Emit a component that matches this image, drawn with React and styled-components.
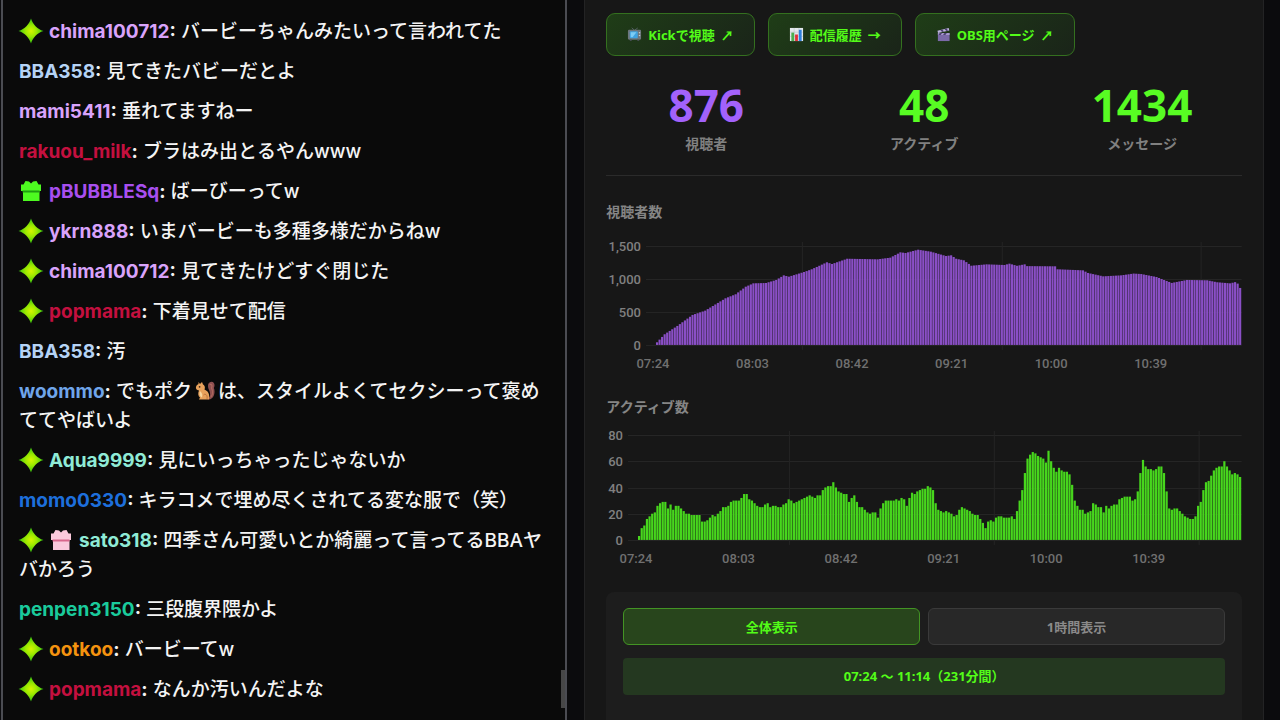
import { useState } from 'react';
import styled, { createGlobalStyle } from 'styled-components';

const GlobalStyle = createGlobalStyle`
	* {
		box-sizing: border-box;
	}
	body {
		margin: 0;
		background: #0b0b0d;
		overflow: hidden;
	}
	button {
		font-family: inherit;
		cursor: pointer;
	}
`;

const NAME_COLORS = {
	pink: '#d9a3fb',
	sky: '#b5d3f5',
	red: '#c4103f',
	purple: '#a84fee',
	blue: '#6fa5ea',
	mint: '#8febd6',
	royal: '#1d6fdc',
	teal: '#1acb9c',
	orange: '#f5930f',
};

const messages = [
	{ badges: ['star'], name: 'chima100712', color: 'pink', text: 'バービーちゃんみたいって言われてた' },
	{ badges: [], name: 'BBA358', color: 'sky', text: '見てきたバビーだとよ' },
	{ badges: [], name: 'mami5411', color: 'pink', text: '垂れてますねー' },
	{ badges: [], name: 'rakuou_milk', color: 'red', text: 'ブラはみ出とるやんwww' },
	{ badges: ['gift'], name: 'pBUBBLESq', color: 'purple', text: 'ばーびーってw' },
	{ badges: ['star'], name: 'ykrn888', color: 'pink', text: 'いまバービーも多種多様だからねw' },
	{ badges: ['star'], name: 'chima100712', color: 'pink', text: '見てきたけどすぐ閉じた' },
	{ badges: ['star'], name: 'popmama', color: 'red', text: '下着見せて配信' },
	{ badges: [], name: 'BBA358', color: 'sky', text: '汚' },
	{
		badges: [],
		name: 'woommo',
		color: 'blue',
		text: 'でもポク',
		emote: true,
		rest: 'は、スタイルよくてセクシーって褒めててやばいよ',
	},
	{ badges: ['star'], name: 'Aqua9999', color: 'mint', text: '見にいっちゃったじゃないか' },
	{ badges: [], name: 'momo0330', color: 'royal', text: 'キラコメで埋め尽くされてる変な服で（笑）' },
	{
		badges: ['star', 'pinkGift'],
		name: 'sato318',
		color: 'mint',
		text: '四季さん可愛いとか綺麗って言ってるBBAヤバかろう',
	},
	{ badges: [], name: 'penpen3150', color: 'teal', text: '三段腹界隈かよ' },
	{ badges: ['star'], name: 'ootkoo', color: 'orange', text: 'バービーてw' },
	{ badges: ['star'], name: 'popmama', color: 'red', text: 'なんか汚いんだよな' },
];

// [minute, viewers]
const viewerPoints = [
	[0, 40], [3, 162], [8, 288], [14, 455], [19, 520], [27, 707], [31, 768], [35, 883],
	[38, 934], [43, 939], [47, 985], [50, 1055], [52, 1035], [58, 1106], [61, 1147], [67, 1253],
	[69, 1227], [75, 1307], [87, 1298], [92, 1323], [96, 1404], [98, 1394], [103, 1444], [108, 1414],
	[114, 1348], [116, 1359], [118, 1307], [121, 1283], [124, 1201], [130, 1222], [137, 1212], [139, 1232],
	[142, 1200], [145, 1222], [146, 1195], [157, 1192], [158, 1147], [168, 1131], [170, 1091], [176, 1040],
	[183, 1055], [188, 1082], [191, 1075], [197, 1030], [203, 940], [209, 985], [217, 980], [221, 950],
	[226, 934], [228, 952], [229, 930], [230, 864],
];

const activeValues = [
	3, 9, 11, 16, 18, 20, 21, 26, 28, 29, 29, 24, 27, 23, 26, 26, 24, 22, 20, 20,
	19, 19, 19, 19, 14, 14, 15, 17, 19, 18, 20, 22, 25, 25, 26, 29, 30, 30, 30, 32,
	35, 35, 31, 30, 28, 26, 25, 25, 27, 28, 25, 26, 26, 25, 25, 27, 28, 31, 30, 28,
	29, 30, 31, 32, 33, 34, 33, 32, 34, 34, 38, 40, 41, 41, 44, 40, 37, 36, 35, 35,
	29, 32, 34, 29, 25, 25, 23, 21, 20, 21, 21, 17, 24, 28, 30, 30, 30, 30, 31, 30,
	32, 31, 26, 32, 36, 35, 37, 38, 39, 39, 41, 40, 38, 28, 23, 22, 21, 22, 21, 20,
	18, 19, 23, 25, 24, 23, 22, 20, 19, 19, 16, 13, 9, 14, 15, 14, 17, 18, 18, 17,
	17, 17, 18, 16, 22, 30, 38, 51, 62, 65, 67, 66, 64, 63, 62, 59, 68, 60, 55, 52,
	55, 53, 52, 52, 50, 42, 30, 26, 23, 23, 20, 21, 22, 28, 27, 25, 25, 21, 26, 24,
	26, 27, 27, 31, 32, 33, 33, 33, 30, 31, 37, 51, 61, 56, 54, 54, 53, 54, 56, 56,
	51, 37, 24, 23, 24, 24, 22, 20, 18, 17, 16, 16, 18, 26, 29, 38, 44, 45, 49, 53,
	55, 56, 56, 60, 56, 53, 50, 51, 50, 48,
];

const fillMinutes = (points) => {
	const values = [];
	for (let i = 0; i < points.length - 1; i++) {
		const [from, a] = points[i];
		const [to, b] = points[i + 1];
		for (let m = from; m < to; m++) {
			values.push(a + ((b - a) * (m - from)) / (to - from));
		}
	}
	values.push(points[points.length - 1][1]);
	return values;
};

const viewerValues = fillMinutes(viewerPoints);
const timeLabels = ['07:24', '08:03', '08:42', '09:21', '10:00', '10:39'];

const StarBadge = () => (
	<BadgeSvg viewBox="0 0 24 24" role="img" aria-label="サブスク">
		<defs>
			<radialGradient id="starFill">
				<stop offset="0" stopColor="#d4f500" />
				<stop offset="0.45" stopColor="#9be800" />
				<stop offset="1" stopColor="#2fc40f" />
			</radialGradient>
		</defs>
		<path
			d="M12 -0.5C14 5.6 18 10 24.500 12C18 14 14 18.400 12 24.500C10 18.400 6 14 -0.500 12C6 10 10 5.600 12 -0.500Z"
			fill="url(#starFill)"
		/>
	</BadgeSvg>
);

const GiftBadge = ({ main, band }) => (
	<BadgeSvg viewBox="0 0 24 24" role="img" aria-label="ギフト">
		<path d="M6.500 2L10 2.500L12 4.500L14 2.500L17.500 2L19.500 5.500H22V12H2V5.500H4.500Z" fill={main} />
		<path d="M4 12H20.500V22H4Z" fill={main} />
		<path d="M3.500 11.500H20.500V13.500H3.500Z" fill={band} />
	</BadgeSvg>
);

const badgeByType = {
	star: <StarBadge />,
	gift: <GiftBadge main="#4dfa20" band="#1f9c10" />,
	pinkGift: <GiftBadge main="#fbc9dc" band="#d9668c" />,
};

const Squirrel = () => (
	<EmoteSvg viewBox="0 0 20 20" role="img" aria-label="リス">
		<path d="M12 17C16 17 15.500 12 14 9C12 5 13 1 16.500 0.800C20 1 20 5 18.800 7C20.500 10 19.500 18 14 18.500Z" fill="#8e4f50" />
		<path d="M14.500 3.500C17 3 17.500 5 16.500 7C18 10 17.500 14 16 16" fill="none" stroke="#b06a5e" strokeWidth="1.200" />
		<path d="M3.500 1L5 3L7 1L8 3.500C10.500 5 10 7.500 9.500 8.500C13 10 15 13 14 18.500H4L5 16.500C3 15 2.800 12 4 9.500C1.500 9 0.500 7.500 1 6C1.500 4 2.500 3.500 3.500 3Z" fill="#e8a25c" />
		<path d="M5 10C4 12.500 4.500 15 6.500 16.500C8 15 7.500 12 5 10Z" fill="#f8d7a0" />
		<path d="M8.500 14C10 12 13 14 12 18" fill="none" stroke="#b9713c" strokeWidth="0.900" />
		<circle cx="4.600" cy="5.800" r="0.900" fill="#3c2417" />
	</EmoteSvg>
);

const TvIcon = () => (
	<LinkSvg viewBox="0 0 16 16" aria-hidden="true">
		<path d="M5 0.800L8 3.500L11.500 1" fill="none" stroke="#5d666c" strokeWidth="0.900" />
		<rect x="1" y="3" width="14" height="10.500" rx="1.200" fill="#6d767c" />
		<rect x="3" y="4.500" width="8.500" height="7.500" rx="1" fill="#3fa2e0" />
		<path d="M4 5.500H10L6 11H4Z" fill="#7cccf5" />
		<circle cx="13.300" cy="6" r="0.800" fill="#c6ced2" />
		<circle cx="13.300" cy="9" r="0.800" fill="#c6ced2" />
		<path d="M3 13.500H5V15H3ZM11 13.500H13V15H11Z" fill="#454d52" />
	</LinkSvg>
);

const ChartIcon = () => (
	<LinkSvg viewBox="0 0 16 16" aria-hidden="true">
		<rect x="1" y="1" width="14" height="14" fill="#e3e8ec" />
		<path d="M1 5.500H15M1 10H15M5.500 1V15M10.500 1V15" stroke="#b5c1c9" strokeWidth="0.600" />
		<rect x="2.500" y="6" width="3" height="9" fill="#4caf50" />
		<rect x="6.500" y="8" width="3" height="7" fill="#e0303a" />
		<rect x="10.500" y="3" width="3" height="12" fill="#2f7fe0" />
	</LinkSvg>
);

const ClapperIcon = () => (
	<LinkSvg viewBox="0 0 16 16" aria-hidden="true">
		<path d="M1.500 4L13.500 1L14.200 3.600L2.200 6.400Z" fill="#bfb4e0" />
		<path d="M4.500 3.300L6.500 5.400L8.500 4.900L6.700 2.700ZM9 2.100L11 4.300L13 3.800L11.200 1.600Z" fill="#4d4170" />
		<rect x="2" y="6.500" width="12.500" height="8.500" fill="#7b6aa8" />
		<path d="M2 6.500H14.500V8.500H2Z" fill="#a99bd0" />
		<path d="M4 6.500H6.500L5 8.500H2.500ZM9 6.500H11.500L10 8.500H7.500Z" fill="#4d4170" />
	</LinkSvg>
);

const links = [
	{ icon: <TvIcon />, label: 'Kickで視聴', arrow: '↗' },
	{ icon: <ChartIcon />, label: '配信履歴', arrow: '→' },
	{ icon: <ClapperIcon />, label: 'OBS用ページ', arrow: '↗' },
];

const stats = [
	{ value: 876, label: '視聴者', color: '#a262fb' },
	{ value: 48, label: 'アクティブ', color: '#58fc23' },
	{ value: 1434, label: 'メッセージ', color: '#58fc23' },
];

const BarChart = ({ title, values, max, ticks, left, top, plotHeight, color, labelStart, labelStep, gridX }) => {
	const width = 636;
	const bottom = top + plotHeight;
	const pitch = (width - left) / values.length;
	return (
		<ChartSvg viewBox={`0 0 ${width} ${bottom + 26}`} role="img" aria-label={title}>
			{ticks.map((tick) => {
				const y = Math.round(bottom - (tick / max) * plotHeight);
				return (
					<g key={tick}>
						<rect x={left - 10} y={y} width={width - left + 10} height="1" fill="#262626" />
						<AxisText x={left - 15} y={y + 5} textAnchor="end">
							{tick.toLocaleString('en-US')}
						</AxisText>
					</g>
				);
			})}
			{gridX.map((x) => (
				<rect key={x} x={x} y={top - 4} width="1" height={plotHeight + 9} fill="#242424" />
			))}
			{values.map((value, i) => {
				const height = (value / max) * plotHeight;
				return (
					<rect key={i} x={left + i * pitch} y={bottom - height} width={pitch * 0.84} height={height} fill={color} />
				);
			})}
			{timeLabels.map((label, i) => (
				<AxisText key={label} x={labelStart + i * labelStep} y={bottom + 23} textAnchor="middle" $dim>
					{label}
				</AxisText>
			))}
		</ChartSvg>
	);
};

const App = () => {
	const [range, setRange] = useState('all');

	return (
		<Page>
			<GlobalStyle />
			<Chat>
				<MessageList>
					{messages.map((message, i) => (
						<Message key={i}>
							{message.badges.map((type) => (
								<Badge key={type}>{badgeByType[type]}</Badge>
							))}
							<UserName $color={NAME_COLORS[message.color]}>{message.name}</UserName>
							<Colon>:</Colon> {message.text}
							{message.emote && <Squirrel />}
							{message.rest}
						</Message>
					))}
				</MessageList>
				<ScrollThumb />
			</Chat>
			<Panel>
				<Links>
					{links.map(({ icon, label, arrow }) => (
						<LinkButton key={label} href="#">
							{icon}
							<span>{label}</span>
							<Arrow>{arrow}</Arrow>
						</LinkButton>
					))}
				</Links>
				<Stats>
					{stats.map(({ value, label, color }) => (
						<Stat key={label}>
							<StatValue $color={color}>{value}</StatValue>
							<StatLabel>{label}</StatLabel>
						</Stat>
					))}
				</Stats>
				<ChartSection>
					<ChartTitle>視聴者数</ChartTitle>
					<BarChart
						title="視聴者数"
						values={viewerValues}
						max={1500}
						ticks={[0, 500, 1000, 1500]}
						left={50}
						top={10}
						plotHeight={99}
						color="#8a4fc6"
						labelStart={47}
						labelStep={99.6}
						gridX={[196, 396, 595]}
					/>
				</ChartSection>
				<ChartSection>
					<ChartTitle>アクティブ数</ChartTitle>
					<BarChart
						title="アクティブ数"
						values={activeValues}
						max={80}
						ticks={[0, 20, 40, 60, 80]}
						left={32}
						top={4}
						plotHeight={105}
						color="#47d61d"
						labelStart={30}
						labelStep={102.6}
						gridX={[183, 388, 593]}
					/>
				</ChartSection>
				<Controls>
					<RangeButtons>
						<RangeButton type="button" $active={range === 'all'} onClick={() => setRange('all')}>
							全体表示
						</RangeButton>
						<RangeButton type="button" $active={range === 'hour'} onClick={() => setRange('hour')}>
							1時間表示
						</RangeButton>
					</RangeButtons>
					<RangeInfo>07:24 〜 11:14（231分間）</RangeInfo>
				</Controls>
			</Panel>
		</Page>
	);
};

export default App;

const Page = styled.div`
	display: grid;
	grid-template-columns: 5fr 6fr;
	gap: 17px;
	height: 100vh;
	padding: 0 16px 0 1px;
	overflow: hidden;
`;
const Chat = styled.section`
	position: relative;
	min-width: 0;
	background: #0a0a0a;
	border: solid #4b4c52;
	border-width: 0 2px;
	overflow: hidden;
`;
const MessageList = styled.ul`
	display: flex;
	flex-direction: column;
	gap: 11px;
	margin: 0;
	padding: 17px 16px;
	list-style: none;
`;
const Message = styled.li`
	color: #f4f4f4;
	font-family: Inter, 'Noto Sans CJK JP', sans-serif;
	font-size: 19px;
	font-weight: 500;
	line-height: 29px;
`;
const UserName = styled.span`
	color: ${({ $color }) => $color};
	font-weight: 700;
`;
const Colon = styled.span`
	font-weight: 700;
`;
const Badge = styled.span`
	display: inline-block;
	height: 24px;
	margin-right: 6px;
	vertical-align: top;
`;
const BadgeSvg = styled.svg`
	display: block;
	width: 24px;
	height: 24px;
	margin-top: 2px;
	overflow: visible;
`;
const EmoteSvg = styled.svg`
	width: 20px;
	height: 20px;
	margin: 0 3px;
	vertical-align: -3px;
`;
const ScrollThumb = styled.div`
	position: absolute;
	right: 0;
	bottom: 12px;
	width: 4px;
	height: 38px;
	background: #474747;
`;
const Panel = styled.main`
	min-width: 0;
	padding: 13px 21px 0;
	background: #171717;
	border: solid #232324;
	border-width: 0 1px;
	font-family: 'Noto Sans', 'Noto Sans CJK JP', sans-serif;
	overflow: hidden;
`;
const Links = styled.nav`
	display: flex;
	gap: 13px;
`;
const LinkButton = styled.a`
	display: flex;
	align-items: center;
	gap: 6px;
	height: 43px;
	padding: 0 20px;
	border: 1px solid #34701f;
	border-radius: 9px;
	background: linear-gradient(135deg, #1f3d17, #1a2419);
	color: #53fc18;
	font-size: 13px;
	font-weight: 700;
	text-decoration: none;
	white-space: nowrap;
`;
const Arrow = styled.span`
	font-family: 'Noto Sans CJK JP', sans-serif;
	font-weight: 900;
`;
const LinkSvg = styled.svg`
	width: 15px;
	height: 15px;
`;
const Stats = styled.div`
	display: grid;
	grid-template-columns: repeat(3, 1fr);
	gap: 18px;
	padding: 20px 0 21px;
	border-bottom: 1px solid #2b2b2b;
`;
const Stat = styled.div`
	text-align: center;
`;
const StatValue = styled.div`
	color: ${({ $color }) => $color};
	font-size: 44px;
	font-weight: 700;
	line-height: 58px;
`;
const StatLabel = styled.div`
	color: #808080;
	font-size: 14px;
	font-weight: 700;
	line-height: 20px;
`;
const ChartSection = styled.section`
	padding-top: 26px;
`;
const ChartTitle = styled.h2`
	margin: 0 0 14px;
	color: #858585;
	font-size: 14px;
	font-weight: 700;
	line-height: 20px;
`;
const ChartSvg = styled.svg`
	display: block;
	width: 100%;
	height: auto;
	overflow: visible;
`;
const AxisText = styled.text`
	fill: ${({ $dim }) => ($dim ? '#707070' : '#808080')};
	font-family: Roboto, 'Liberation Sans', sans-serif;
	font-size: 13px;
	font-weight: 500;
`;
const Controls = styled.section`
	display: flex;
	flex-direction: column;
	gap: 13px;
	margin-top: 26px;
	padding: 16px 17px 60px;
	border-radius: 8px;
	background: #1d1d1d;
`;
const RangeButtons = styled.div`
	display: grid;
	grid-template-columns: 1fr 1fr;
	gap: 8px;
`;
const RangeButton = styled.button`
	height: 37px;
	border: 1px solid ${({ $active }) => ($active ? '#439424' : '#3a3a3a')};
	border-radius: 6px;
	background: ${({ $active }) => ($active ? '#28451c' : '#282828')};
	color: ${({ $active }) => ($active ? '#53fc18' : '#8a8a8a')};
	font-size: 13px;
	font-weight: 700;
`;
const RangeInfo = styled.div`
	border-radius: 4px;
	background: #243820;
	color: #53fc18;
	font-size: 13px;
	font-weight: 700;
	line-height: 37px;
	text-align: center;
`;
